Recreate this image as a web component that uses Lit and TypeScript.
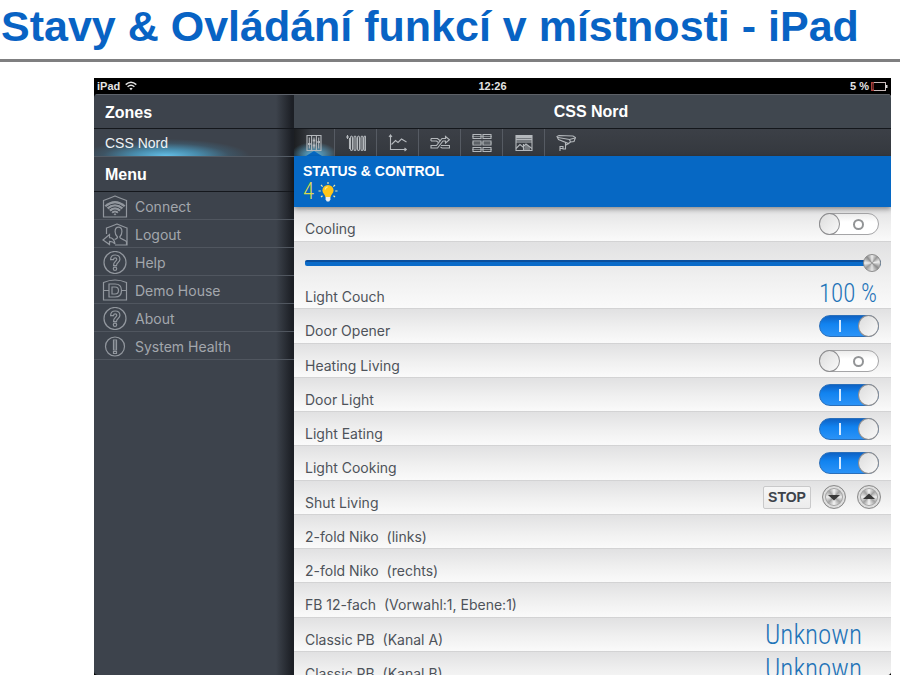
import { LitElement, html, svg, css, nothing } from "lit";
import { customElement, state } from "lit/decorators.js";
import { classMap } from "lit/directives/class-map.js";

const wifi = svg`<svg class="wifi" viewBox="0 0 12 10" width="12" height="10" fill="none" stroke="#e4e4e4" stroke-width="1.5">
  <path d="M.7 3.6Q6-1 11.3 3.6M2.6 5.8Q6 2.8 9.4 5.8"/><path d="M4.4 7.4Q6 6.2 7.6 7.4L6 9.2z" fill="#e4e4e4" stroke="none"/></svg>`;

const battery = svg`<svg viewBox="0 0 17 9" width="17" height="9" fill="none">
  <rect x=".5" y=".5" width="14" height="8" stroke="#c9bcbc"/><path d="M15.5 3v3" stroke="#ddd" stroke-width="2"/>
  <rect x="0" y="0" width="3" height="9" fill="#a8433f"/><rect x="1.4" y="1.4" width="1" height="6" fill="#2a0807"/></svg>`;

const menuIcons: Record<string, unknown> = {
  connect: svg`<path d="M1.5 5.500Q7 3.500 13 1q6 2.500 11.500 4.500v16.500h-23z"/>
    <path d="M2.500 10.500Q13 1.500 23.500 10.500L13 20.500z" fill="currentColor" stroke="none"/>
    <path d="M4 12.600Q13 5 22 12.600M6.500 14.700Q13 9 19.500 14.700M9 16.800Q13 13.200 17 16.800M11 18.700Q13 17 15 18.700" stroke="#3d434c" stroke-width="1"/>`,
  logout: svg`<path d="M4.500 11V5Q9 3.500 15 1q6 2.500 10 4v17H13"/>
    <path d="M12.500 16.500c2-.6 3-1.200 3-2.500-1.800-1.600-2.400-3.400-2.400-5.600 0-2.700 1.200-4.200 3.400-4.200s3.400 1.500 3.400 4.200c0 2.200-.7 4-2.200 5.600 0 2 4.500 2.300 6.800 4.500v3.500"/>
    <path d="M1 17l6.500-5.500v3.200q4.500 0 5.500 6.300-2-2.600-5.500-2.600v3.200z"/>`,
  help: svg`<circle cx="13" cy="11.500" r="11"/>
    <path d="M8.600 8.700q0-4.700 4.600-4.700 4.700 0 4.700 4.300 0 2-2 3.500-1.400 1.100-1.400 2.900h-3q0-2.700 1.800-4.200 1.500-1.200 1.500-2.200 0-1.500-1.600-1.500t-1.700 1.900z"/><circle cx="13" cy="17.800" r="1.700"/>`,
  demo: svg`<path d="M1.500 3.500Q13-1.500 24.500 3.500V21h-23z"/>
    <path d="M1.500 11.500H7M19.500 11.500h5"/><path d="M7 5h6q6.500 0 6.500 6.500T13 18H7z"/><path d="M10 8h3q3.500 0 3.500 3.500T13 15h-3z"/>`,
  health: svg`<circle cx="13" cy="11.500" r="9.500"/><path d="M11.500 5h3v10h-3zM11.500 16.500h3v2h-3z"/><path d="M13 6v8" stroke-width=".8"/>`,
};

const tabIcons: Record<string, unknown> = {
  sliders: svg`<path d="M3 2.500h14v15H3zM7.600 2.500v15M12.400 2.500v15"/><path d="M5.300 4.500v11M10 4.500v11M14.700 4.500v11"/>
    <path d="M4 11h2.600M8.700 7.500h2.600M8.700 12.500h2.600M13.400 9H16" stroke-width="2.200"/>`,
  radiator: svg`<path d="M0 4h3M1.500 2v4M3.500 5v11"/><path d="M4.500 5q0-2 1-2t1 2v11q0 1.500-1 1.500t-1-1.500zM8 5q0-2 1-2t1 2v11q0 1.500-1 1.500T8 16zM11.500 5q0-2 1-2t1 2v11q0 1.500-1 1.500t-1-1.500zM15 5q0-2 1-2t1 2v11q0 1.500-1 1.500T15 16zM18 5q0-2 .8-2t.8 2v11q0 1.500-.8 1.500T18 16z"/>`,
  chart: svg`<path d="M2.500 2v14.500H18M1 4l1.500-2L4 4M16.500 15l1.800 1.500-1.800 1.500"/><path d="M3.500 11.500l4-4 2.500 2 3.500-3.500 5 3"/>`,
  routes: svg`<path d="M1 5.500h6.500l3 2.500M1 8h5.500l2 1.500M1 5.500V8"/><path d="M1 12.500h5.500l5.500-7h3.500v-2L19.500 6.800l-4 3.200V8H13l-5.500 7H1z"/><path d="M11 12.500h8.500V15h-7.500l-1.500-1"/>`,
  grid: svg`<path d="M1 1.500h8v4H1zM11 1.500h8v4h-8zM1 8h8v4H1zM11 8h8v4h-8zM1 14.500h8v4H1zM11 14.500h8v4h-8z"/><path d="M0 3.500h20M0 10h20M0 16.500h20" stroke-width=".6"/>`,
  blind: svg`<path d="M2 2.500h16v15H2z"/><path d="M2 4h16M2 6.500h16" stroke-width="1.800"/><path d="M2 9h16"/><path d="M2 15.500l4-4 3 2.500 3-3 6 4.500M9.500 11v6" /><path d="M11 12.500q3-2 5 2v3H9.500z" fill="currentColor" fill-opacity=".5" stroke="none"/>`,
  camera: svg`<path d="M1 3.500L3 2.500 17 3l2.500 1.500-1.500 4-3.500.500-2 1.500-10-4z"/><path d="M2 4.500l11.500 2L19 5M13.500 6.500l1 2.500M9.500 9.500v6.500H7v-2.500H4v4.500M4 15.500h3M12.500 10.500L10 12"/>`,
};

const bulb = svg`<svg viewBox="0 0 20 20" width="20" height="20" fill="none">
  <path d="M10 0v2M3 3l1.600 1.600M17 3l-1.600 1.600M.500 9h2.300M17.200 9h2.300M3 15l1.500-1.300M17 15l-1.500-1.300" stroke="#f3e9a6" stroke-width="1.200"/>
  <path d="M10 3a5.600 5.600 0 0 0-5.600 5.500c0 2.800 2.600 4 3 6.500h5.200c.4-2.500 3-3.700 3-6.500A5.600 5.600 0 0 0 10 3z" fill="#ffc61a"/>
  <path d="M7 7.500q.6-2.200 2.600-2.700" stroke="#ffe88c" stroke-width="1.200"/>
  <path d="M7.600 15h4.800v2.500l-1.200 2H8.800l-1.200-2z" fill="#e9eef2"/></svg>`;

const menu: [string, string][] = [
  ["connect", "Connect"], ["logout", "Logout"], ["help", "Help"],
  ["demo", "Demo House"], ["help", "About"], ["health", "System Health"],
];

const tabs: [string, string][] = [
  ["sliders", "Status and control"], ["radiator", "Heating"], ["chart", "Charts"], ["routes", "Scenes"],
  ["grid", "Overview"], ["blind", "Blinds"], ["camera", "Cameras"],
];

interface Device {
  name: string;
  kind?: "switch" | "dimmer" | "shutter" | "value";
  on?: boolean;
  value?: string;
}

const devices: Device[] = [
  { name: "Cooling", kind: "switch", on: false },
  { name: "Light Couch", kind: "dimmer" },
  { name: "Door Opener", kind: "switch", on: true },
  { name: "Heating Living", kind: "switch", on: false },
  { name: "Door Light", kind: "switch", on: true },
  { name: "Light Eating", kind: "switch", on: true },
  { name: "Light Cooking", kind: "switch", on: true },
  { name: "Shut Living", kind: "shutter" },
  { name: "2-fold Niko  (links)" },
  { name: "2-fold Niko  (rechts)" },
  { name: "FB 12-fach  (Vorwahl:1, Ebene:1)" },
  { name: "Classic PB  (Kanal A)", kind: "value", value: "Unknown" },
  { name: "Classic PB  (Kanal B)", kind: "value", value: "Unknown" },
];

@customElement("device-row")
class DeviceRow extends LitElement {
  static properties = { device: { attribute: false }, level: { state: true } };
  declare device: Device;
  declare level: number;

  constructor() {
    super();
    this.level = 100;
  }

  static styles = css`
    :host { display: block; box-sizing: border-box; overflow: hidden;
      background: linear-gradient(#e1e1e2, #f0f0f0 55%, #fafafa); border-bottom: 1px solid #d3d3d4; }
    .row { display: flex; justify-content: space-between; height: 100%; padding: 0 12px 0 11px; }
    .name { font: 14px/20px Inter, "Liberation Sans", sans-serif; color: #4e535a; white-space: pre; padding-top: 12px; }
    .switch { appearance: none; flex: none; box-sizing: border-box; display: flex; align-items: center; width: 60px; height: 22px;
      margin: 6px 0 0; border: 1px solid #a5a5a7; border-radius: 11px; background: linear-gradient(#ececec, #fff 40%); }
    .switch::before { content: ""; box-sizing: border-box; width: 21px; height: 22px; margin: -1px; border: 1px solid #8e8e90;
      border-radius: 50%; background: linear-gradient(135deg, #dcdcdc, #fafafa); }
    .switch::after { content: ""; box-sizing: border-box; width: 11px; height: 11px; margin-left: 14px;
      border: 2px solid #929496; border-radius: 50%; }
    .switch:checked { flex-direction: row-reverse; border-color: #2a6fba; background: linear-gradient(#0e62c4, #1183f0 40%, #2b93f7); }
    .switch:checked::after { width: 2px; height: 12px; margin: 0 18px 0 0; border: 0; border-radius: 0; background: #d6eaff; }
    .dimmer { height: 100%; padding: 0 12px 0 11px; }
    .range { appearance: none; display: block; width: calc(100% + 2px); height: 18px; margin: 0; background: none; padding-top: 12px; }
    .range::-webkit-slider-runnable-track { height: 6px; border-radius: 2px;
      background: linear-gradient(#0a4f9d 33%, #0a6bc9 34%); }
    .range::-webkit-slider-thumb { appearance: none; width: 18px; height: 18px; margin-top: -6px; border: 1px solid #8c8c8c; border-radius: 50%;
      background: conic-gradient(#eee, #999 40deg, #eee 80deg, #8d8d8d 130deg, #e6e6e6 180deg, #999 230deg, #eee 270deg, #8d8d8d 320deg, #eee); }
    .line { display: flex; justify-content: space-between; }
    .line .name { padding-top: 15px; }
    .level, .value { font: 300 25px/30px "Liberation Sans Narrow", "Roboto Condensed", Roboto, sans-serif; color: #1f74b8; }
    .level { padding: 7px 2px 0 0; }
    .value { font-size: 27px; padding: 2px 17px 0 0; }
    .shutter { display: flex; align-items: center; gap: 11px; height: 32px; margin-right: -2px; }
    .stop { height: 23px; width: 48px; padding: 0 0 1px; border: 1px solid #c9c9ca; border-radius: 2px; color: #3d434b;
      background: linear-gradient(#f6f6f6, #ececec); font: bold 14px/20px "Liberation Sans", sans-serif; }
    .knob { display: grid; place-items: center; width: 24px; height: 24px; padding: 0; border: 1px solid #8b8b8b; border-radius: 50%;
      box-shadow: inset 0 0 0 2px #dedede, inset 0 0 0 3px #a4a4a4; color: #3a3a3a;
      background: conic-gradient(#f4f4f4, #a3a3a3 45deg, #eee 90deg, #a3a3a3 130deg, #f4f4f4 180deg, #a3a3a3 225deg, #eee 270deg, #a3a3a3 320deg, #f4f4f4); }
  `;

  private control() {
    const d = this.device;
    if (d.kind === "switch") return html`<input class="switch" id="c" type="checkbox" .checked=${!!d.on}>`;
    if (d.kind === "value") return html`<output class="value">${d.value}</output>`;
    if (d.kind === "shutter") return html`<div class="shutter">
      <button class="stop">STOP</button>
      <button class="knob" aria-label="Down"><svg width="12" height="8" viewBox="0 0 12 8"><path d="M0 2h12L6 7.500z" fill="currentColor"/></svg></button>
      <button class="knob" aria-label="Up"><svg width="12" height="8" viewBox="0 0 12 8"><path d="M0 6h12L6 .500z" fill="currentColor"/></svg></button>
    </div>`;
    return nothing;
  }

  render() {
    const d = this.device;
    if (d.kind === "dimmer") return html`<div class="dimmer">
      <input class="range" id="c" type="range" min="0" max="100" .value=${String(this.level)}
        @input=${(e: Event) => (this.level = Number((e.target as HTMLInputElement).value))}>
      <div class="line"><label class="name" for="c">${d.name}</label><output class="level">${this.level} %</output></div>
    </div>`;
    return html`<div class="row">
      ${d.kind === "switch" ? html`<label class="name" for="c">${d.name}</label>` : html`<span class="name">${d.name}</span>`}
      ${this.control()}
    </div>`;
  }
}

@customElement("app-root")
class AppRoot extends LitElement {
  @state() declare private tab: number;

  constructor() {
    super();
    this.tab = 0;
  }

  static styles = css`
    :host { display: flex; flex-direction: column; height: 100vh; overflow: hidden; background: #fff;
      font-family: "Liberation Sans", sans-serif; }
    h1, h2, ul { margin: 0; padding: 0; }
    .title { font-size: 43px; line-height: 48px; padding: 2px 0 9px 1px; color: #0863c4; border-bottom: 3px solid #7f7f80; white-space: nowrap; }
    .tablet { flex: 1; min-height: 0; margin: 16px 9px 12px 94px; display: flex; flex-direction: column; background: #000; }
    .status { flex: none; display: grid; grid-template-columns: 1fr auto 1fr; align-items: center; height: 16px; padding: 0 3px;
      color: #e4e4e4; font: bold 11px/16px "Liberation Sans", sans-serif; }
    .carrier, .power { display: flex; align-items: center; gap: 5px; }
    .power { justify-content: flex-end; gap: 2px; }
    .panes { flex: 1; min-height: 0; display: grid; grid-template-columns: 200px minmax(0, 1fr); border-radius: 4px; overflow: hidden; }
    .side { background: linear-gradient(90deg, transparent 182px, #1c1f25 198px), #3d434c; color: #a3a7ac; min-height: 0; overflow: hidden; }
    h2 { font-size: 16px; line-height: 34px; height: 34px; color: #fff; }
    .side h2 { padding-left: 11px; line-height: 36px; border-bottom: 1px solid #14171c; }
    .side .zones { height: 35px; line-height: 35px; box-sizing: border-box; border-top: 1px solid #5d626a; }
    .zone { display: block; height: 27px; padding-left: 11px; font-size: 14px; line-height: 28px; color: #eef2f5; text-decoration: none;
      background: radial-gradient(84px 17px at 72px 100%, #64c0e8, #4b9dc3cc 40%, #3f769455 75%, transparent); border-bottom: 1px solid #535b65; }
    ul { list-style: none; }
    .item { display: flex; align-items: center; gap: 7px; height: 28px; padding: 2px 0 0 8px; box-sizing: border-box; border-bottom: 1px solid #50565f;
      font: 14px/26px Inter, "Liberation Sans", sans-serif; color: inherit; text-decoration: none; }
    .item svg { fill: none; stroke: currentColor; color: #92979e; stroke-width: 1.2; }
    .main { display: flex; flex-direction: column; min-height: 0; background: #f4f4f4; }
    .head { flex: none; text-align: center; line-height: 33px; box-sizing: border-box; height: 35px; border-top: 1px solid #5d6167; border-bottom: 1px solid #14171c;
      padding-right: 3px; background: #40474f; }
    .tabs { flex: none; display: flex; height: 27px; background: linear-gradient(#3c4047, #34383e); }
    .tab { display: grid; place-items: center; width: 42px; padding: 0; border: 0; border-right: 1px solid #565b63; background: none; color: #b4b8bc; position: relative; }
    .tab:last-child { border-right: 0; }
    .tab svg { fill: none; stroke: currentColor; stroke-width: 1.1; }
    .tab.on { width: 41px; background: radial-gradient(24px 14px at 50% 100%, #62c3f0, transparent), linear-gradient(90deg, #1c1e21, #3a3e44 45%); }
    .tab.on::after { content: ""; position: absolute; left: 50%; bottom: 0; margin-left: -8px; border: solid transparent; border-width: 0 8px 5px;
      border-bottom-color: #0668c4; }
    .banner { flex: none; box-sizing: border-box; height: 51px; padding: 6px 9px 0; background: #0668c4; color: #fff; position: relative;
      box-shadow: 0 2px 5px #00000066; }
    .caption { font: bold 14px/18px "Liberation Sans", sans-serif; }
    .lights { display: flex; align-items: center; gap: 4px; font: 300 23px/23px "Liberation Sans Narrow", "Roboto Condensed", Roboto, sans-serif; color: #dbd94c; }
    device-row { flex: none; height: 34px; }
    device-row:nth-child(4n + 3), device-row:first-child { height: 35px; }
    device-row:nth-child(2) { height: 67px; }
    .list { min-height: 0; overflow: hidden; display: flex; flex-direction: column; }
  `;

  render() {
    return html`
      <h1 class="title">Stavy &amp; Ovládání funkcí v místnosti - iPad</h1>
      <div class="tablet">
        <div class="status">
          <span class="carrier">iPad ${wifi}</span><span>12:26</span><span class="power">5 % ${battery}</span>
        </div>
        <div class="panes">
          <nav class="side">
            <h2 class="zones">Zones</h2>
            <a class="zone" href="#zone">CSS Nord</a>
            <h2>Menu</h2>
            <ul>${menu.map(([icon, label]) => html`<li><a class="item" href="#menu">
              <svg viewBox="0 0 26 23" width="26" height="23">${menuIcons[icon]}</svg>${label}</a></li>`)}</ul>
          </nav>
          <main class="main">
            <h2 class="head">CSS Nord</h2>
            <div class="tabs">${tabs.map(([icon, label], i) => html`<button aria-label=${label}
              class=${classMap({ tab: true, on: i === this.tab })} @click=${() => (this.tab = i)}>
              <svg viewBox="0 0 20 20" width="20" height="20">${tabIcons[icon]}</svg></button>`)}</div>
            <div class="banner">
              <div class="caption">STATUS &amp; CONTROL</div>
              <div class="lights">4 ${bulb}</div>
            </div>
            <div class="list">${devices.map((d) => html`<device-row .device=${d}></device-row>`)}</div>
          </main>
        </div>
      </div>`;
  }
}
